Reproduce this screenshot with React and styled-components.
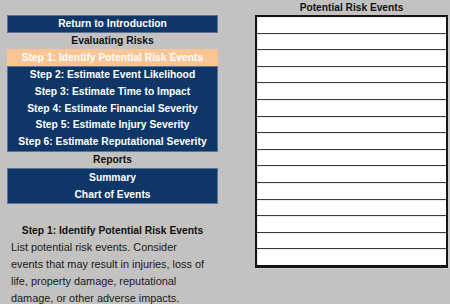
import React from 'react'
import styled, { createGlobalStyle } from 'styled-components'

const GlobalStyle = createGlobalStyle`
  * {
    margin: 0;
    padding: 0;
    box-sizing: border-box;
  }
  body {
    background: #c3c2c0;
    font-family: "Liberation Sans", Arial, sans-serif;
  }
`

const Page = styled.div`
  display: flex;
  width: 450px;
  height: 304px;
  padding-left: 7px;
  background: #c3c2c0;
`

const LeftColumn = styled.div`
  display: flex;
  flex-direction: column;
  width: 211px;
  padding-top: 15px;
`

const NavBlock = styled.div`
  display: flex;
  flex-direction: column;
  background: #0e3767;
  border: 1px solid #5a7396;
`

const NavItem = styled.div`
  height: ${p => p.$h || 17}px;
  line-height: ${p => p.$h || 17}px;
  text-align: center;
  font-size: 10.3px;
  font-weight: bold;
  color: #ffffff;
  white-space: nowrap;
  background: ${p => (p.$active ? '#fbc593' : 'transparent')};
`

const SectionLabel = styled.div`
  height: 16px;
  line-height: 16px;
  text-align: center;
  font-size: 10.3px;
  font-weight: bold;
  color: #111;
`

const Help = styled.div`
  margin-top: 18px;
  padding-left: 4px;
  color: #111;
`

const HelpTitle = styled.div`
  height: 17px;
  line-height: 17px;
  text-align: center;
  font-size: 10.3px;
  font-weight: bold;
  padding-right: 4px;
`

const HelpText = styled.p`
  font-size: 10.9px;
  line-height: 17px;
  color: #1a1a1a;
`

const RightColumn = styled.div`
  display: flex;
  flex-direction: column;
  width: 193px;
  margin-left: 37px;
`

const TableTitle = styled.div`
  height: 15px;
  line-height: 16px;
  text-align: center;
  font-size: 10.2px;
  font-weight: bold;
  color: #111;
`

const Table = styled.div`
  display: flex;
  flex-direction: column;
  height: 253px;
  background: #fff;
  border: 2px solid #151515;
  border-bottom-width: 3px;
  box-shadow: 1px 1px 0 #d4d3d1;
`

const Row = styled.div`
  flex: 1;
  background: #fff;
  border-top: ${p => (p.$first ? 'none' : '1px solid #3c3c3c')};
  box-shadow: inset 1px 1px 0 #ececec;
`

const steps = [
  'Step 2: Estimate Event Likelihood',
  'Step 3: Estimate Time to Impact',
  'Step 4: Estimate Financial Severity',
  'Step 5: Estimate Injury Severity',
  'Step 6: Estimate Reputational Severity',
]

export default function App() {
  return (
    <Page>
      <GlobalStyle />
      <LeftColumn>
        <NavBlock>
          <NavItem $h={16}>Return to Introduction</NavItem>
        </NavBlock>
        <SectionLabel>Evaluating Risks</SectionLabel>
        <NavItem $active>Step 1: Identify Potential Risk Events</NavItem>
        <NavBlock>
          {steps.map(s => (
            <NavItem key={s} $h={16.8}>{s}</NavItem>
          ))}
        </NavBlock>
        <SectionLabel>Reports</SectionLabel>
        <NavBlock>
          <NavItem>Summary</NavItem>
          <NavItem>Chart of Events</NavItem>
        </NavBlock>
        <Help>
          <HelpTitle>Step 1: Identify Potential Risk Events</HelpTitle>
          <HelpText>
            List potential risk events. Consider
            <br />
            events that may result in injuries, loss of
            <br />
            life, property damage, reputational
            <br />
            damage, or other adverse impacts.
          </HelpText>
        </Help>
      </LeftColumn>
      <RightColumn>
        <TableTitle>Potential Risk Events</TableTitle>
        <Table>
          {Array.from({ length: 15 }, (_, i) => (
            <Row key={i} $first={i === 0} />
          ))}
        </Table>
      </RightColumn>
    </Page>
  )
}
